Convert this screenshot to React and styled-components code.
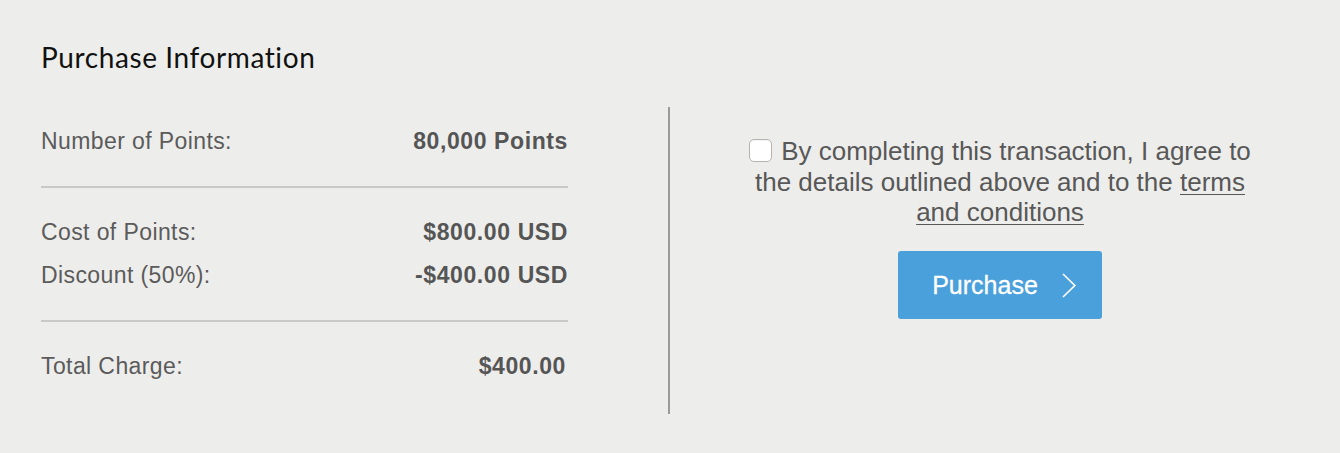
import React, { useState } from "react";
import styled, { createGlobalStyle } from "styled-components";

const GlobalStyle = createGlobalStyle`
  html, body {
    margin: 0;
    padding: 0;
    background-color: #ededeb;
  }
  body {
    font-family: "Liberation Sans", Arial, sans-serif;
    min-height: 453px;
  }
`;

const Panel = styled('div')`
  padding: 40px 10px 0 41px;
  background-color: #ededeb;
  min-height: 413px;
`;

const Title = styled('h2')`
  margin: 0 0 23px;
  font-family: "Lato", "Liberation Sans", sans-serif;
  font-weight: 400;
  font-size: 28px;
  line-height: 34px;
  color: #111;
  letter-spacing: 0.6px;
`;

const Body = styled('div')`
  display: flex;
  align-items: flex-start;
`;

const Summary = styled('div')`
  width: 527px;
  color: #5b5b5b;
`;

const Section = styled('div')`
  padding: 23px 0;
  &:not(:last-child) {
    border-bottom: 2px solid #c9c9c7;
  }
`;

const Row = styled('div')`
  display: flex;
  justify-content: space-between;
  align-items: center;
  height: 43px;
  font-size: 23px;
  letter-spacing: 0.4px;
`;

const Value = styled('span')`
  font-weight: 700;
  color: #555;
  letter-spacing: 0.6px;
  padding-right: ${props => props.inset || 0}px;
`;

const Divider = styled('div')`
  width: 2px;
  height: 307px;
  margin: 10px 0 0 100px;
  background-color: #9b9b9b;
`;

const Agreement = styled('div')`
  flex: 1;
  padding-top: 39px;
  display: flex;
  flex-direction: column;
  align-items: center;
`;

const Terms = styled('label')`
  width: 520px;
  text-align: center;
  font-size: 26px;
  line-height: 30.7px;
  color: #585858;
`;

const Check = styled('input')`
  appearance: none;
  -webkit-appearance: none;
  width: 23px;
  height: 23px;
  margin: 0 9px 0 0;
  vertical-align: -2px;
  background-color: #fff;
  border: 1px solid #b4b4b4;
  border-radius: 5px;
  box-shadow: inset 0 1px 1px rgba(0, 0, 0, 0.05);
  &:checked {
    background-color: #4aa0db;
    border-color: #3a8cc4;
  }
`;

const Link = styled('a')`
  color: inherit;
  text-decoration: underline;
  text-underline-offset: 3px;
  text-decoration-thickness: 1px;
`;

const PurchaseButton = styled('button')`
  margin-top: 23px;
  width: 204px;
  height: 68px;
  display: flex;
  align-items: center;
  justify-content: center;
  gap: 24px;
  padding: 0 0 0 8px;
  border: none;
  border-radius: 3px;
  background-color: #4aa0db;
  color: #fff;
  font-family: "Liberation Sans", Arial, sans-serif;
  font-size: 25px;
  -webkit-text-stroke: 0.3px #fff;
  cursor: pointer;
`;

const rows = [
  [["Number of Points:", "80,000 Points"]],
  [["Cost of Points:", "$800.00 USD"], ["Discount (50%):", "-$400.00 USD"]],
  [["Total Charge:", "$400.00", 2]],
];

const Chevron = () => (
  <svg width="14" height="25" viewBox="0 0 14 25" fill="none">
    <polyline points="1,1 12.8,12.5 1,24" stroke="#fff" strokeWidth="1.7" />
  </svg>
);

export default function App() {
  const [agreed, setAgreed] = useState(false);

  return (
    <>
      <GlobalStyle />
      <Panel>
        <Title>Purchase Information</Title>
        <Body>
          <Summary>
            {rows.map((group, i) => (
              <Section key={i}>
                {group.map(([label, value, inset]) => (
                  <Row key={label}>
                    <span>{label}</span>
                    <Value inset={inset}>{value}</Value>
                  </Row>
                ))}
              </Section>
            ))}
          </Summary>
          <Divider />
          <Agreement>
            <Terms>
              <Check type="checkbox" checked={agreed} onChange={e => setAgreed(e.target.checked)} />
              By completing this transaction, I agree to the details outlined above and to the{" "}
              <Link href="#">terms and conditions</Link>
            </Terms>
            <PurchaseButton>
              <span>Purchase</span>
              <Chevron />
            </PurchaseButton>
          </Agreement>
        </Body>
      </Panel>
    </>
  );
}
